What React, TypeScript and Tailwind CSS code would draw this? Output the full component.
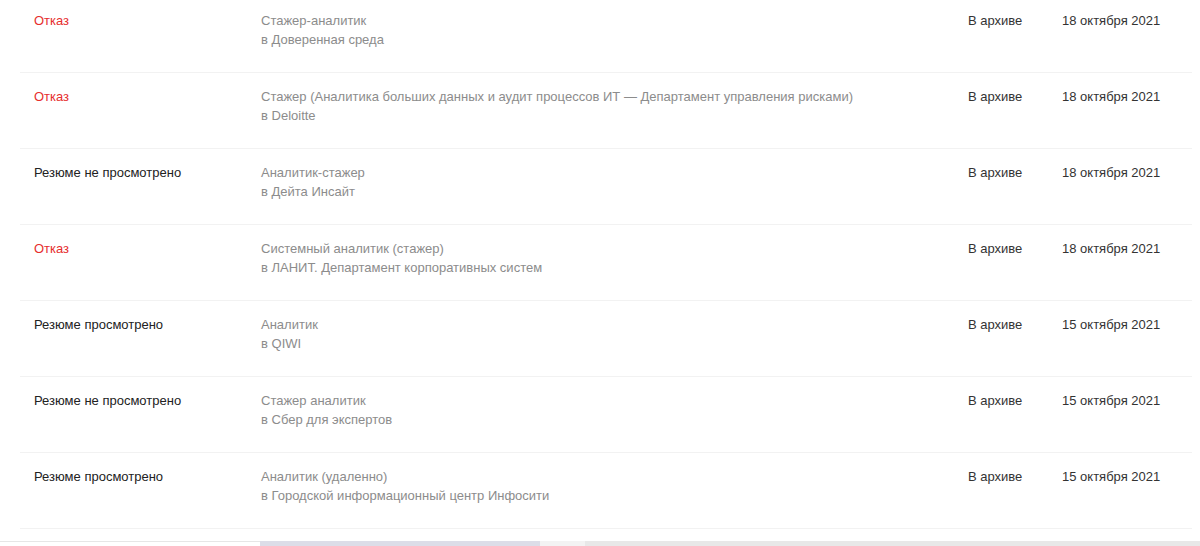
import React from "react";

type Row = {
  status: string;
  refused?: boolean;
  title: string;
  company: string;
  state: string;
  date: string;
};

const rows: Row[] = [
  {
    status: "Отказ",
    refused: true,
    title: "Стажер-аналитик",
    company: "в Доверенная среда",
    state: "В архиве",
    date: "18 октября 2021",
  },
  {
    status: "Отказ",
    refused: true,
    title:
      "Стажер (Аналитика больших данных и аудит процессов ИТ — Департамент управления рисками)",
    company: "в Deloitte",
    state: "В архиве",
    date: "18 октября 2021",
  },
  {
    status: "Резюме не просмотрено",
    title: "Аналитик-стажер",
    company: "в Дейта Инсайт",
    state: "В архиве",
    date: "18 октября 2021",
  },
  {
    status: "Отказ",
    refused: true,
    title: "Системный аналитик (стажер)",
    company: "в ЛАНИТ. Департамент корпоративных систем",
    state: "В архиве",
    date: "18 октября 2021",
  },
  {
    status: "Резюме просмотрено",
    title: "Аналитик",
    company: "в QIWI",
    state: "В архиве",
    date: "15 октября 2021",
  },
  {
    status: "Резюме не просмотрено",
    title: "Стажер аналитик",
    company: "в Сбер для экспертов",
    state: "В архиве",
    date: "15 октября 2021",
  },
  {
    status: "Резюме просмотрено",
    title: "Аналитик (удаленно)",
    company: "в Городской информационный центр Инфосити",
    state: "В архиве",
    date: "15 октября 2021",
  },
];

export default function App() {
  return (
    <div className="w-[1200px] h-[546px] overflow-hidden bg-white flex flex-col font-['Liberation_Sans',Arial,sans-serif] text-[13px]">
      {/* Negotiations list */}
      <div className="flex-1 -mt-[3px] pl-[20px] pr-[8px]">
        {rows.map((row, index) => (
          <div
            key={index}
            className="flex h-[76px] pt-[14px] border-b border-[#f2f2f2] leading-[19px]"
          >
            <div
              className={`w-[241px] pl-[14px] ${
                row.refused ? "text-[#e62e2e]" : "text-[#222]"
              }`}
            >
              {row.status}
            </div>
            <div className="flex-1 text-[#8c8c8c]">
              <div>{row.title}</div>
              <div>{row.company}</div>
            </div>
            <div className="w-[94px] text-[#333]">{row.state}</div>
            <div className="w-[130px] text-[#333]">{row.date}</div>
          </div>
        ))}
      </div>

      {/* Bottom scroll strip */}
      <div className="flex h-[5px]">
        <div className="w-[260px] border-t border-[#e6e6e6] bg-white" />
        <div className="w-[280px] bg-[#dcdde8]" />
        <div className="w-[45px] bg-[#f3f3f3]" />
        <div className="flex-1 bg-[#e8e8e8]" />
      </div>
    </div>
  );
}
